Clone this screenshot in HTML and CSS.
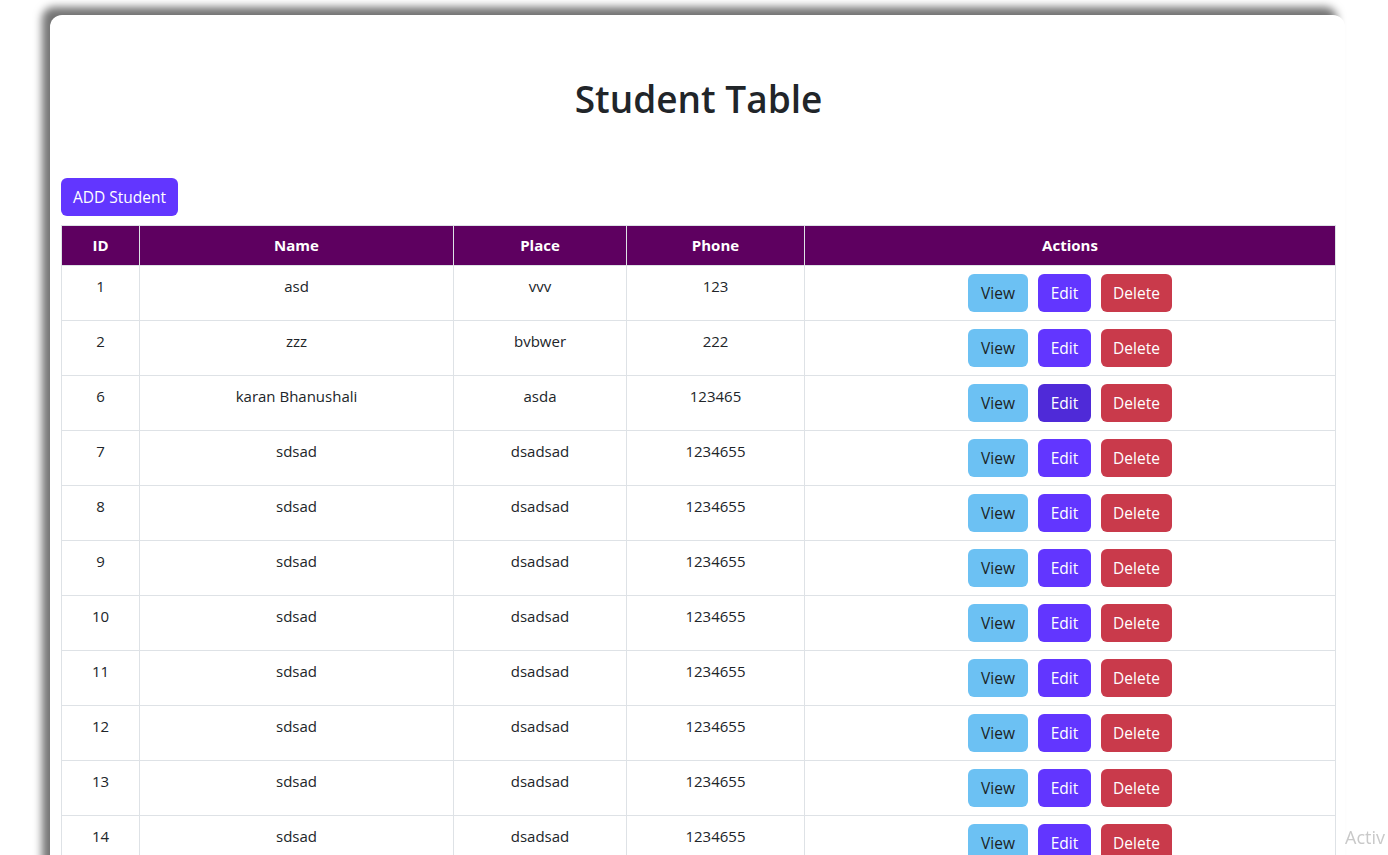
FILE: index.html
```html
<!DOCTYPE html>
<html lang="en">
<head>
<meta charset="utf-8">
<title>Student Table</title>
<link rel="stylesheet" href="styles.css">
</head>
<body>
<div class="card">
  <h1 class="title">Student Table</h1>
  <div class="toolbar"><button class="btn btn-add">ADD Student</button></div>
  <table class="students">
    <thead>
      <tr><th class="c-id">ID</th><th class="c-name">Name</th><th class="c-place">Place</th><th class="c-phone">Phone</th><th>Actions</th></tr>
    </thead>
    <tbody>
      <tr><td>1</td><td>asd</td><td>vvv</td><td>123</td><td class="actions"><button class="btn btn-view">View</button><button class="btn btn-edit">Edit</button><button class="btn btn-delete">Delete</button></td></tr>
      <tr><td>2</td><td>zzz</td><td>bvbwer</td><td>222</td><td class="actions"><button class="btn btn-view">View</button><button class="btn btn-edit">Edit</button><button class="btn btn-delete">Delete</button></td></tr>
      <tr><td>6</td><td>karan Bhanushali</td><td>asda</td><td>123465</td><td class="actions"><button class="btn btn-view">View</button><button class="btn btn-edit is-hover">Edit</button><button class="btn btn-delete">Delete</button></td></tr>
      <tr><td>7</td><td>sdsad</td><td>dsadsad</td><td>1234655</td><td class="actions"><button class="btn btn-view">View</button><button class="btn btn-edit">Edit</button><button class="btn btn-delete">Delete</button></td></tr>
      <tr><td>8</td><td>sdsad</td><td>dsadsad</td><td>1234655</td><td class="actions"><button class="btn btn-view">View</button><button class="btn btn-edit">Edit</button><button class="btn btn-delete">Delete</button></td></tr>
      <tr><td>9</td><td>sdsad</td><td>dsadsad</td><td>1234655</td><td class="actions"><button class="btn btn-view">View</button><button class="btn btn-edit">Edit</button><button class="btn btn-delete">Delete</button></td></tr>
      <tr><td>10</td><td>sdsad</td><td>dsadsad</td><td>1234655</td><td class="actions"><button class="btn btn-view">View</button><button class="btn btn-edit">Edit</button><button class="btn btn-delete">Delete</button></td></tr>
      <tr><td>11</td><td>sdsad</td><td>dsadsad</td><td>1234655</td><td class="actions"><button class="btn btn-view">View</button><button class="btn btn-edit">Edit</button><button class="btn btn-delete">Delete</button></td></tr>
      <tr><td>12</td><td>sdsad</td><td>dsadsad</td><td>1234655</td><td class="actions"><button class="btn btn-view">View</button><button class="btn btn-edit">Edit</button><button class="btn btn-delete">Delete</button></td></tr>
      <tr><td>13</td><td>sdsad</td><td>dsadsad</td><td>1234655</td><td class="actions"><button class="btn btn-view">View</button><button class="btn btn-edit">Edit</button><button class="btn btn-delete">Delete</button></td></tr>
      <tr><td>14</td><td>sdsad</td><td>dsadsad</td><td>1234655</td><td class="actions"><button class="btn btn-view">View</button><button class="btn btn-edit">Edit</button><button class="btn btn-delete">Delete</button></td></tr>
    </tbody>
  </table>
</div>
<div class="watermark">Activ</div>
</body>
</html>
```

FILE: styles.css
```css
html, body {
  margin: 0;
  padding: 0;
  background: #ffffff;
  overflow: hidden;
}
body {
  font-family: "Open Sans", "Noto Sans", sans-serif;
  font-size: 15px;
  color: #212529;
  padding: 15px 0 0 50px;
  height: 855px;
  box-sizing: border-box;
}
.card {
  width: 1295px;
  box-sizing: border-box;
  background: #fff;
  border-radius: 12px;
  box-shadow: -8px -8px 8px rgba(0, 0, 0, 0.55);
  padding: 0 9px 20px 11px;
}
.title {
  margin: 0;
  padding: 60px 0 0;
  height: 163px;
  box-sizing: border-box;
  text-align: center;
  font-size: 37px;
  line-height: 48px;
  font-weight: 600;
  color: #212529;
}
.toolbar {
  display: flex;
  margin-bottom: 9px;
}
.btn {
  font-family: inherit;
  font-size: 15.5px;
  line-height: 24px;
  padding: 7px 0;
  height: 38px;
  border: 0;
  border-radius: 6px;
  color: #fff;
  cursor: pointer;
  text-align: center;
}
.btn-add {
  background: #6236ff;
  width: 117px;
}
.students {
  width: 1275px;
  border-collapse: collapse;
  table-layout: fixed;
}
.students th, .students td {
  border: 1px solid #dee2e6;
  text-align: center;
}
.students th {
  background: #5e0060;
  color: #fff;
  font-weight: 700;
  height: 40px;
  padding: 0 8px 2px;
  box-sizing: border-box;
  font-size: 15px;
}
.c-id { width: 78px; }
.c-name { width: 314px; }
.c-place { width: 173px; }
.c-phone { width: 178px; }
.students td {
  vertical-align: top;
  padding: 8px 8px 9px;
  height: 54px;
  box-sizing: border-box;
  line-height: 24px;
}
.students td.actions {
  vertical-align: middle;
  padding: 8px;
}
.actions .btn + .btn {
  margin-left: 10px;
}
.btn-view {
  background: #6cc1f3;
  color: #1b1f23;
  width: 60px;
}
.btn-edit {
  background: #6236ff;
  width: 53px;
}
.btn-edit.is-hover {
  background: #4f2ad8;
}
.btn-delete {
  background: #c93a4b;
  width: 71px;
}
.watermark {
  position: fixed;
  left: 1345px;
  top: 825px;
  font-family: "Open Sans", sans-serif;
  font-size: 18px;
  color: #c9c9c9;
  white-space: nowrap;
}
```
